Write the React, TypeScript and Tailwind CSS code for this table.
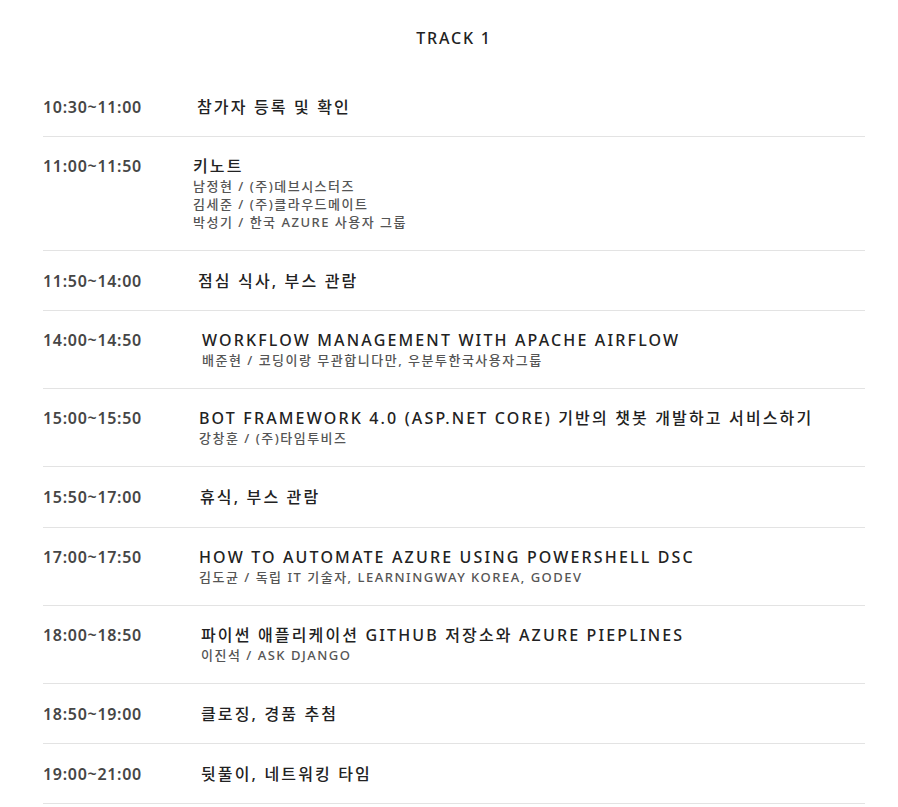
const FONT = "font-['Noto_Sans','Noto_Sans_CJK_KR',sans-serif]";

type Session = {
  time: string;
  title: string;
  speakers?: string[];
  indent: string;
  height?: string;
};

const sessions: Session[] = [
  { time: "10:30~11:00", title: "참가자 등록 및 확인", indent: "pl-[4px]" },
  {
    time: "11:00~11:50",
    title: "키노트",
    speakers: ["남정현 / (주)데브시스터즈", "김세준 / (주)클라우드메이트", "박성기 / 한국 AZURE 사용자 그룹"],
    indent: "pl-0",
  },
  { time: "11:50~14:00", title: "점심 식사, 부스 관람", indent: "pl-[5px]" },
  {
    time: "14:00~14:50",
    title: "WORKFLOW MANAGEMENT WITH APACHE AIRFLOW",
    speakers: ["배준현 / 코딩이랑 무관합니다만, 우분투한국사용자그룹"],
    indent: "pl-[9px]",
  },
  {
    time: "15:00~15:50",
    title: "BOT FRAMEWORK 4.0 (ASP.NET CORE) 기반의 챗봇 개발하고 서비스하기",
    speakers: ["강창훈 / (주)타임투비즈"],
    indent: "pl-[6px]",
  },
  { time: "15:50~17:00", title: "휴식, 부스 관람", indent: "pl-[7px]", height: "h-[61px]" },
  {
    time: "17:00~17:50",
    title: "HOW TO AUTOMATE AZURE USING POWERSHELL DSC",
    speakers: ["김도균 / 독립 IT 기술자, LEARNINGWAY KOREA, GODEV"],
    indent: "pl-[6px]",
  },
  {
    time: "18:00~18:50",
    title: "파이썬 애플리케이션 GITHUB 저장소와 AZURE PIEPLINES",
    speakers: ["이진석 / ASK DJANGO"],
    indent: "pl-[8px]",
  },
  { time: "18:50~19:00", title: "클로징, 경품 추첨", indent: "pl-[8px]" },
  { time: "19:00~21:00", title: "뒷풀이, 네트워킹 타임", indent: "pl-[8px]" },
];

function Row({ s }: { s: Session }) {
  const multi = !!s.speakers;
  return (
    <div
      className={`flex border-b border-[#e3e3e3] ${
        multi ? "pt-[18px] pb-[19px]" : `items-center ${s.height ?? "h-[60px]"}`
      }`}
    >
      <div className="w-[150px] shrink-0 text-[16px] font-semibold tracking-[0.7px] text-[#464646] leading-[22px]">
        {s.time}
      </div>
      <div className={`flex-1 ${s.indent}`}>
        <div className="text-[16px] font-medium tracking-[2.15px] text-[#222] leading-[22px]">{s.title}</div>
        {s.speakers?.map((sp) => (
          <div key={sp} className="text-[13px] font-medium tracking-[1.5px] text-[#555] leading-[18px]">
            {sp}
          </div>
        ))}
      </div>
    </div>
  );
}

export default function App() {
  return (
    <div className={`min-h-screen bg-white ${FONT}`}>
      <div className="mx-[43px] w-[822px]">
        <div className="pt-[27px] text-center text-[16px] font-medium tracking-[1.8px] text-[#222] leading-[22px]">
          TRACK 1
        </div>
        <div className="mt-[28px]">
          {sessions.map((s) => (
            <Row key={s.time} s={s} />
          ))}
        </div>
      </div>
    </div>
  );
}
